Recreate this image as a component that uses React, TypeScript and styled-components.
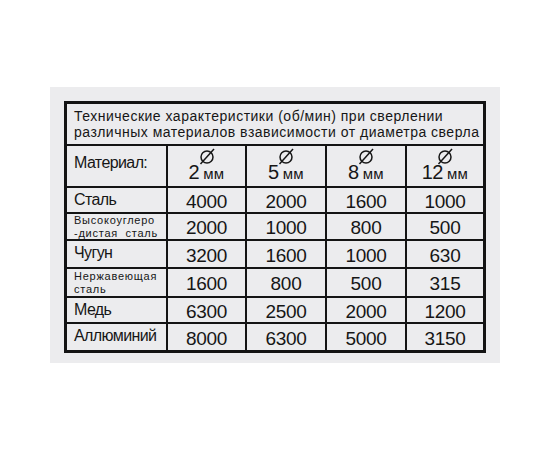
import React from 'react';
import styled, { createGlobalStyle } from 'styled-components';

const GlobalStyle = createGlobalStyle`
  html, body {
    margin: 0;
    padding: 0;
    background: #ffffff;
  }
  body {
    font-family: "Liberation Sans", Arial, sans-serif;
    color: #161616;
  }
`

const Page = styled.div`
  width: 550px;
  height: 450px;
  padding: 87px 0 0 50px;
  box-sizing: border-box;
`

const Card = styled.div`
  width: 450px;
  height: 276px;
  box-sizing: border-box;
  padding: 14px 16px 10px 14px;
  background: #ececee;
`

const Table = styled.div`
  display: grid;
  grid-template-columns: 99px 77px 78px 78px 76px;
  grid-template-rows: 40px 40px 24px 25px 26px 27px 24px 26px;
  gap: 2px;
  border: 3px solid #141414;
  background: #141414;
  width: max-content;
`

const Cell = styled.div`
  background: #ececee;
  overflow: hidden;
`

const Title = styled(Cell)`
  grid-column: 1 / -1;
  padding: 4px 0 0 7px;
  font-size: 14px;
  line-height: 16px;
  letter-spacing: 0.5px;
  white-space: nowrap;
`

const Label = styled(Cell)<{ $small?: boolean; $top?: number }>`
  padding: ${(p) => p.$top ?? 3}px 0 0 7px;
  font-size: ${(p) => (p.$small ? '11px' : '16px')};
  line-height: ${(p) => (p.$small ? '12.5px' : '18px')};
  letter-spacing: ${(p) => (p.$small ? '0.75px' : '-0.6px')};
  white-space: nowrap;
`

const HeadCell = styled(Cell)`
  display: flex;
  flex-direction: column;
  align-items: center;
  padding-top: 2px;
`

const Size = styled.div`
  display: flex;
  align-items: baseline;
  gap: 4px;
  margin-top: -3px;
  line-height: 20px;
`

const SizeNum = styled.span`
  font-size: 20px;
  letter-spacing: -0.5px;
`

const SizeUnit = styled.span`
  font-size: 15px;
  letter-spacing: 0.3px;
`

const Num = styled(Cell)`
  display: flex;
  align-items: center;
  justify-content: center;
  padding-top: 3px;
  font-size: 19px;
  letter-spacing: -0.3px;
`

const Diameter = () => (
  <svg width="18" height="17" viewBox="0 0 18 17">
    <circle cx="9" cy="9" r="6" fill="none" stroke="#161616" strokeWidth="1.5" />
    <line x1="2.5" y1="16" x2="16" y2="1" stroke="#161616" strokeWidth="1.5" />
  </svg>
)

const sizes = ['2', '5', '8', '12'];

const rows: { label: string[]; small?: boolean; top?: number; values: string[] }[] = [
  { label: ['Сталь'], values: ['4000', '2000', '1600', '1000'] },
  { label: ['Высокоуглеро', '-дистая  сталь'], small: true, top: 0, values: ['2000', '1000', '800', '500'] },
  { label: ['Чугун'], values: ['3200', '1600', '1000', '630'] },
  { label: ['Нержавеющая', 'сталь'], small: true, top: 1, values: ['1600', '800', '500', '315'] },
  { label: ['Медь'], values: ['6300', '2500', '2000', '1200'] },
  { label: ['Аллюминий'], values: ['8000', '6300', '5000', '3150'] },
];

const App: React.FC = () => {
  return (
    <Page>
      <GlobalStyle />
      <Card>
        <Table>
          <Title>
            Технические характеристики (об/мин) при сверлении
            <br />
            различных материалов взависимости от диаметра сверла
          </Title>
          <Label $top={8}>Материал:</Label>
          {sizes.map((s) => (
            <HeadCell key={s}>
              <Diameter />
              <Size>
                <SizeNum>{s}</SizeNum>
                <SizeUnit>мм</SizeUnit>
              </Size>
            </HeadCell>
          ))}
          {rows.map((r) => (
            <React.Fragment key={r.label[0]}>
              <Label $small={r.small} $top={r.top}>
                {r.label.map((l, i) => (
                  <div key={i} style={{ whiteSpace: 'pre' }}>{l}</div>
                ))}
              </Label>
              {r.values.map((v, i) => (
                <Num key={i}>{v}</Num>
              ))}
            </React.Fragment>
          ))}
        </Table>
      </Card>
    </Page>
  );
}
export default App;
